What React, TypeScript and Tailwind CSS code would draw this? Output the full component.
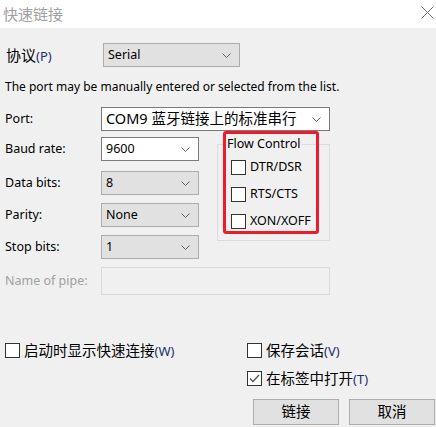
import React from "react"

const font = "font-['Noto_Sans','Noto_Sans_CJK_SC',sans-serif]"

const Chevron = () => (
    <svg width="9" height="5" viewBox="0 0 9 5" className="shrink-0">
        <polyline points="0.5,0.5 4.5,4.5 8.5,0.5" fill="none" stroke="#606060" strokeWidth="1" />
    </svg>
)

const Combo = ({ value, white, className }: { value: string; white?: boolean; className: string }) => (
    <div
        className={`flex items-center justify-between h-[24px] pl-[4px] pr-[8px] border ${white ? "bg-white border-[#7a7a7a]" : "bg-[#e1e1e1] border-[#adadad]"
            } ${className}`}
    >
        <span className="text-[12.5px] text-black whitespace-nowrap">{value}</span>
        <Chevron />
    </div>
)

const Check = ({ checked }: { checked?: boolean }) => (
    <div className="w-[15px] h-[15px] border border-[#333333] bg-white flex items-center justify-center shrink-0">
        {checked && (
            <svg width="11" height="9" viewBox="0 0 11 9">
                <polyline points="1,4.5 4,7.5 10,1" fill="none" stroke="#555555" strokeWidth="1.3" />
            </svg>
        )}
    </div>
)

const Key = ({ k }: { k: string }) => <span className="text-[13px] text-[#1c2f6b]">({k})</span>

const FieldRow = ({ label, children, top }: { label: string; children: React.ReactNode; top: string }) => (
    <div className={`flex items-center ${top}`}>
        <span className="w-[101px] pl-[5px] text-[12.5px] text-black">{label}</span>
        {children}
    </div>
)

export default function App() {
    return (
        <div className={`w-[436px] h-[427px] bg-[#f0f0f0] overflow-hidden ${font}`}>
            {/* title bar */}
            <div className="h-[28px] bg-white flex items-center justify-between pl-[3px] pr-[2px]">
                <span className="text-[15px] text-[#a0a0a0] leading-none">快速链接</span>
                <svg width="13" height="13" viewBox="0 0 13 13" className="-mt-[4px]">
                    <path d="M0.5 0.5 L12.5 12.5 M12.5 0.5 L0.5 12.5" stroke="#707070" strokeWidth="1" />
                </svg>
            </div>

            {/* protocol */}
            <div className="flex items-center mt-[15px]">
                <span className="w-[103px] pl-[6px] text-[15px] text-black">
                    协议<Key k="P" />
                </span>
                <Combo value="Serial" className="w-[137px]" />
            </div>

            <div className="mt-[12px] h-[16px] pl-[5px] text-[12px] leading-[16px] text-black whitespace-nowrap">
                The port may be manually entered or selected from the list.
            </div>

            <FieldRow label="Port:" top="mt-[12px]">
                <Combo
                    white
                    value="COM9 蓝牙链接上的标准串行"
                    className="w-[229px] [&>span]:text-[14.5px]"
                />
            </FieldRow>

            {/* middle block */}
            <div className="flex mt-[6px]">
                <div className="flex flex-col w-[199px]">
                    <FieldRow label="Baud rate:" top="">
                        <Combo white value="9600" className="w-[98px]" />
                    </FieldRow>
                    <FieldRow label="Data bits:" top="mt-[10px]">
                        <Combo value="8" className="w-[98px]" />
                    </FieldRow>
                    <FieldRow label="Parity:" top="mt-[8px]">
                        <Combo value="None" className="w-[98px]" />
                    </FieldRow>
                    <FieldRow label="Stop bits:" top="mt-[8px]">
                        <Combo value="1" className="w-[98px]" />
                    </FieldRow>
                </div>

                <div className="relative ml-[18px] mt-[7px] w-[113px] h-[97px] border border-[#dcdcdc]">
                    <span className="absolute left-[8px] -top-[10px] px-[1px] bg-[#f0f0f0] text-[12.5px] leading-[18px] text-black">
                        Flow Control
                    </span>
                    <div className="flex flex-col gap-[12px] pl-[13px] pt-[15px]">
                        {["DTR/DSR", "RTS/CTS", "XON/XOFF"].map((t) => (
                            <div key={t} className="flex items-center gap-[4px] h-[15px]">
                                <Check />
                                <span className="text-[12.5px] text-black">{t}</span>
                            </div>
                        ))}
                    </div>
                    {/* highlight annotation */}
                    <div className="absolute left-[5px] -top-[14px] w-[96px] h-[103px] border-[3px] border-[#ec1c2c] rounded-[3px]" />
                </div>
            </div>

            <FieldRow label="Name of pipe:" top="mt-[8px] [&>span]:text-[#a0a0a0]">
                <div className="w-[229px] h-[28px] border border-[#d9d9d9] bg-[#f0f0f0]" />
            </FieldRow>

            {/* options */}
            <div className="flex mt-[48px]">
                <div className="w-[247px] pl-[5px] flex items-center gap-[4px] h-[15px]">
                    <Check />
                    <span className="text-[14.5px] text-black whitespace-nowrap">
                        启动时显示快速连接<Key k="W" />
                    </span>
                </div>
                <div className="flex flex-col gap-[13px]">
                    <div className="flex items-center gap-[4px] h-[15px]">
                        <Check />
                        <span className="text-[14.5px] text-black whitespace-nowrap">
                            保存会话<Key k="V" />
                        </span>
                    </div>
                    <div className="flex items-center gap-[4px] h-[15px]">
                        <Check checked />
                        <span className="text-[14.5px] text-black whitespace-nowrap">
                            在标签中打开<Key k="T" />
                        </span>
                    </div>
                </div>
            </div>

            <div className="flex justify-end gap-[10px] mt-[13px] pr-[1px]">
                {["链接", "取消"].map((b) => (
                    <div
                        key={b}
                        className="w-[86px] h-[26px] bg-[#e1e1e1] border border-[#adadad] flex items-center justify-center text-[14.5px] text-black"
                    >
                        {b}
                    </div>
                ))}
            </div>
        </div>
    )
}
